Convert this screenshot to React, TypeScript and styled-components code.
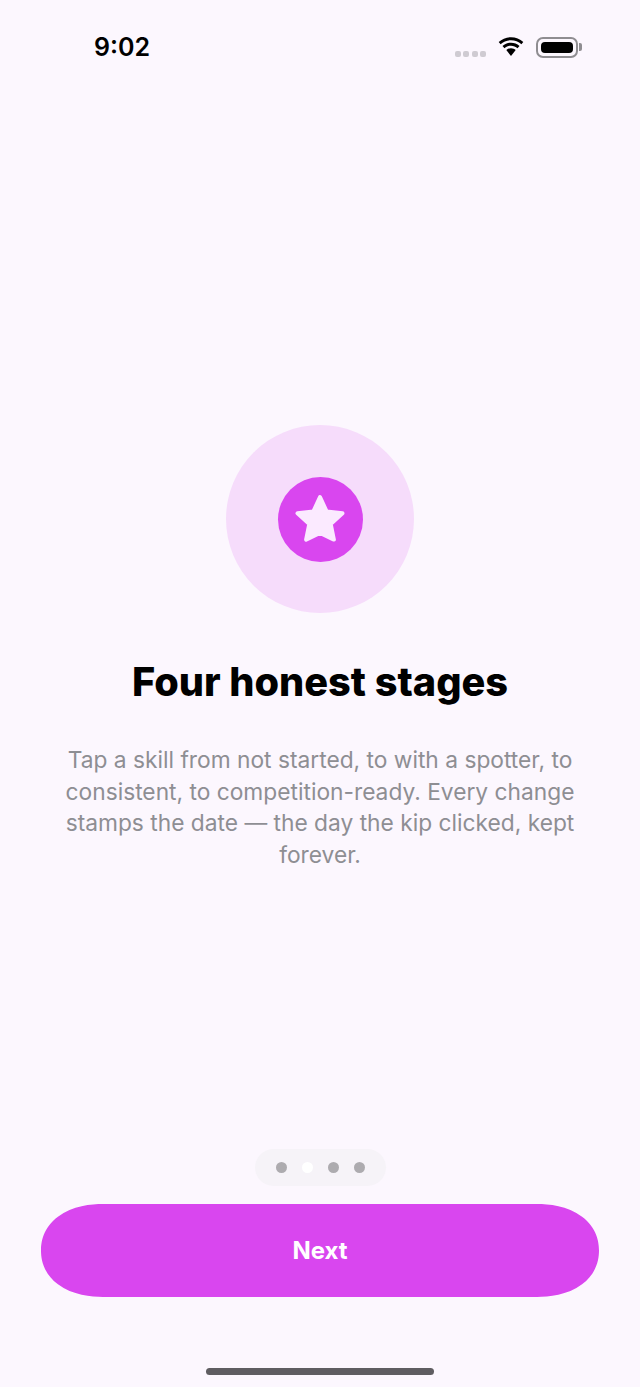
import styled, { createGlobalStyle } from "styled-components";

const GlobalStyle = createGlobalStyle`
  html, body {
    margin: 0;
    padding: 0;
    background: #fcf7fe;
  }
  * {
    box-sizing: border-box;
  }
`;

const App = () => {
  const dots = [false, true, false, false];

  return (
    <>
      <GlobalStyle />
      <Screen>
        <StatusBar>
          <Time>9:02</Time>
          <StatusIcons>
            <SignalDots>
              {[0, 1, 2, 3].map((i) => (
                <SignalDot key={i} />
              ))}
            </SignalDots>
            <svg width="28" height="20" viewBox="0 0 28 20">
              <path
                d="M14 3.200c4 0 7.600 1.500 10.400 4l1.900-2.200C23 2 18.700 .2 14 .2S5 2 1.700 5l1.900 2.200c2.800-2.500 6.400-4 10.400-4z"
                fill="#000"
              />
              <path
                d="M14 8.800c2.500 0 4.700 .9 6.500 2.400l2-2.300C20.100 6.900 17.200 5.700 14 5.700S7.900 6.900 5.500 8.900l2 2.300C9.300 9.700 11.500 8.800 14 8.800z"
                fill="#000"
              />
              <path
                d="M14 11.300c-1.800 0-3.400 .7-4.700 1.700l4.700 6 4.700-6c-1.300-1-2.900-1.700-4.700-1.700z"
                fill="#000"
              />
            </svg>
            <Battery>
              <BatteryFill />
              <BatteryCap />
            </Battery>
          </StatusIcons>
        </StatusBar>

        <Content>
          <Halo>
            <Badge>
              <svg width="52" height="50" viewBox="0 0 52 50">
                <path
                  d="M26 3 L32.600 17.400 L48.500 19.300 L36.700 30 L39.900 45.600 L26 39 L12.100 45.600 L15.300 30 L3.500 19.300 L19.400 17.400 Z"
                  fill="#fbeaff"
                  stroke="#fbeaff"
                  strokeWidth="4"
                  strokeLinejoin="round"
                />
              </svg>
            </Badge>
          </Halo>
          <Title>Four honest stages</Title>
          <Body>
            Tap a skill from not started, to with a spotter, to consistent, to
            competition-ready. Every change stamps the date — the day the kip
            clicked, kept forever.
          </Body>
        </Content>

        <Pager>
          {dots.map((active, i) => (
            <PagerDot key={i} $active={active} />
          ))}
        </Pager>
        <NextButton>Next</NextButton>
        <HomeIndicator />
      </Screen>
    </>
  );
};

export default App;

const Screen = styled.div`
  display: flex;
  flex-direction: column;
  align-items: center;
  width: 640px;
  height: 1387px;
  overflow: hidden;
  background: #fcf7fe;
  font-family: Inter, "Liberation Sans", sans-serif;
`;

const StatusBar = styled.div`
  display: flex;
  justify-content: space-between;
  align-items: center;
  width: 100%;
  height: 94px;
  padding: 0 62px 0 94px;
`;

const Time = styled.div`
  font-size: 25px;
  font-weight: 600;
  color: #000;
`;

const StatusIcons = styled.div`
  display: flex;
  align-items: center;
  gap: 11px;
`;

const SignalDots = styled.div`
  display: flex;
  gap: 2.500px;
  margin-top: 13px;
`;

const SignalDot = styled.span`
  width: 6px;
  height: 6px;
  border-radius: 2px;
  background: #cfcbd2;
`;

const Battery = styled.div`
  position: relative;
  width: 42px;
  height: 21px;
  padding: 3px;
  border: 2px solid #8f8d91;
  border-radius: 7px;
`;

const BatteryFill = styled.div`
  width: 100%;
  height: 100%;
  border-radius: 4px;
  background: #000;
`;

const BatteryCap = styled.span`
  position: absolute;
  top: 4px;
  right: -6px;
  width: 3px;
  height: 8px;
  border-radius: 0 2px 2px 0;
  background: #8f8d91;
`;

const Content = styled.div`
  display: flex;
  flex: 1;
  flex-direction: column;
  align-items: center;
  padding-top: 331px;
`;

const Halo = styled.div`
  display: flex;
  justify-content: center;
  align-items: center;
  width: 188px;
  height: 188px;
  border-radius: 50%;
  background: #f6dcfb;
`;

const Badge = styled.div`
  display: flex;
  justify-content: center;
  align-items: center;
  width: 85px;
  height: 85px;
  border-radius: 50%;
  background: #d946ef;
`;

const Title = styled.h1`
  margin: 44px 0 0;
  font-size: 39.700px;
  line-height: 50px;
  font-weight: 800;
  color: #000;
`;

const Body = styled.p`
  width: 530px;
  margin: 37px 0 0;
  font-size: 22.750px;
  line-height: 31.700px;
  font-weight: 400;
  text-align: center;
  color: #8e8e93;
`;

const Pager = styled.div`
  display: flex;
  align-items: center;
  justify-content: center;
  gap: 15px;
  width: 131px;
  height: 37px;
  border-radius: 19px;
  background: #f6f3f8;
`;

const PagerDot = styled.span<{ $active: boolean }>`
  width: 11px;
  height: 11px;
  border-radius: 50%;
  background: ${(p) => (p.$active ? "#ffffff" : "#adabaf")};
`;

const NextButton = styled.button`
  width: 558px;
  height: 93px;
  margin-top: 18px;
  border: none;
  border-radius: 62px / 46.500px;
  corner-shape: superellipse(1.120);
  background: #d946ef;
  color: #fff;
  font-family: inherit;
  font-size: 24px;
  font-weight: 700;
`;

const HomeIndicator = styled.div`
  width: 228px;
  height: 7px;
  margin: 71px 0 12px;
  border-radius: 4px;
  background: #5f5d61;
`;
